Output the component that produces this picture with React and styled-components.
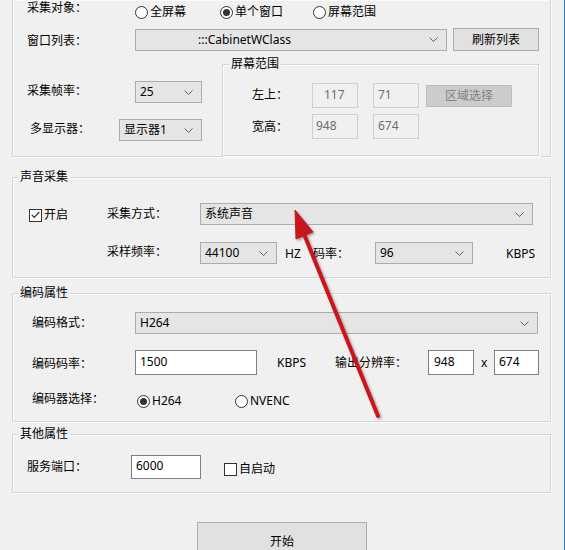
import React from 'react'
import styled, { createGlobalStyle } from 'styled-components'

const GlobalStyle = createGlobalStyle`
  html, body {
    margin: 0;
    padding: 0;
    background: #f0f0f0;
  }
  body {
    font-family: "Noto Sans", "Noto Sans CJK SC", sans-serif;
    font-size: 12px;
    color: #000;
  }
`

const Window = styled.div`
  position: relative;
  box-sizing: border-box;
  width: 565px;
  height: 550px;
  overflow: hidden;
  background: #f0f0f0;
  border-right: 1px solid #2a7fd0;
`

const Group = styled.div`
  position: relative;
  box-sizing: border-box;
  width: ${({ $w }) => $w || 539}px;
  height: ${({ $h }) => $h}px;
  margin: ${({ $mt }) => $mt || 0}px 0 0 ${({ $ml }) => ($ml === undefined ? 12 : $ml)}px;
  padding-top: ${({ $pt }) => $pt || 0}px;
  border: 1px solid #d5d5d5;
  ${({ $open }) => $open && 'border-top: none;'}
  box-shadow: inset 1px 1px 0 #fbfbfb, 1px 1px 0 #fbfbfb;
  flex: none;
`

const GroupTitle = styled.span`
  position: absolute;
  top: -9px;
  left: ${({ $left }) => $left || 5}px;
  padding: 0 2px;
  line-height: 16px;
  background: #f0f0f0;
`

const Row = styled.div`
  display: flex;
  align-items: center;
  height: ${({ $h }) => $h || 22}px;
  margin-top: ${({ $mt }) => $mt || 0}px;
  padding-left: ${({ $pl }) => $pl || 0}px;
`

const Split = styled.div`
  display: flex;
  align-items: flex-start;
  height: ${({ $h }) => $h}px;
  margin-top: ${({ $mt }) => $mt || 0}px;
`

const Column = styled.div`
  flex: none;
  width: ${({ $w }) => $w}px;
  padding-top: ${({ $pt }) => $pt || 0}px;
`

const shift = ({ $shift = 0 }) => `
  margin-top: ${Math.max(0, 2 * $shift)}px;
  margin-bottom: ${Math.max(0, -2 * $shift)}px;
`

const Label = styled.span`
  flex: none;
  box-sizing: border-box;
  width: ${({ $w }) => ($w ? `${$w}px` : 'auto')};
  margin-left: ${({ $ml }) => $ml || 0}px;
  padding-left: ${({ $pl }) => $pl || 0}px;
  line-height: 16px;
  white-space: nowrap;
  ${shift}
`

const Lead = styled.div`
  flex: none;
  display: flex;
  align-items: center;
  box-sizing: border-box;
  width: 94px;
  padding-left: 16px;
  ${shift}
`

const Combo = styled.div`
  flex: none;
  box-sizing: border-box;
  display: flex;
  align-items: center;
  width: ${({ $w }) => $w}px;
  height: 22px;
  padding: 0 8px 0 ${({ $pl }) => $pl || 4}px;
  background: #e5e5e5;
  border: 1px solid #acacac;
  line-height: 16px;

  span {
    flex: 1;
    white-space: nowrap;
    overflow: hidden;
  }
`

const Input = styled.div`
  flex: none;
  box-sizing: border-box;
  display: flex;
  align-items: center;
  width: ${({ $w }) => $w}px;
  height: ${({ $h }) => $h || 25}px;
  margin-left: ${({ $ml }) => $ml || 0}px;
  padding-left: ${({ $pl }) => $pl || 4}px;
  padding-bottom: 2px;
  background: ${({ $disabled }) => ($disabled ? '#f0f0f0' : '#fff')};
  border: 1px solid ${({ $disabled }) => ($disabled ? '#cfcfcf' : '#7f7f7f')};
  color: ${({ $disabled }) => ($disabled ? '#6d6d6d' : '#000')};
  line-height: 16px;
`

const Button = styled.div`
  flex: none;
  box-sizing: border-box;
  display: flex;
  align-items: center;
  justify-content: center;
  width: ${({ $w }) => $w}px;
  height: ${({ $h }) => $h || 23}px;
  margin-left: ${({ $ml }) => $ml || 0}px;
  background: ${({ $disabled }) => ($disabled ? '#cccccc' : '#e1e1e1')};
  border: 1px solid ${({ $disabled }) => ($disabled ? '#bfbfbf' : '#adadad')};
  color: ${({ $disabled }) => ($disabled ? '#838383' : '#000')};
  line-height: 16px;
`

const Option = styled.label`
  flex: none;
  display: flex;
  align-items: center;
  gap: 2px;
  width: ${({ $w }) => ($w ? `${$w}px` : 'auto')};
  margin-left: ${({ $ml }) => $ml || 0}px;
  line-height: 16px;
  white-space: nowrap;
  ${shift}
`

const RadioDot = styled.span`
  position: relative;
  box-sizing: border-box;
  width: 13px;
  height: 13px;
  border: 1px solid #333;
  border-radius: 50%;
  background: #fff;

  &::after {
    content: '';
    display: ${({ $on }) => ($on ? 'block' : 'none')};
    position: absolute;
    left: 2px;
    top: 2px;
    width: 7px;
    height: 7px;
    border-radius: 50%;
    background: #333;
  }
`

const CheckBox = styled.span`
  display: flex;
  align-items: center;
  justify-content: center;
  box-sizing: border-box;
  width: 13px;
  height: 13px;
  border: 1px solid #333;
  background: #fff;
`

const Footer = styled.div`
  display: flex;
  justify-content: center;
  margin-top: 29px;
`

const Overlay = styled.svg`
  position: absolute;
  left: 0;
  top: 0;
  pointer-events: none;
`

function Chevron() {
  return (
    <svg width="9" height="5" viewBox="0 0 9 5">
      <polyline points="0.5,0.5 4.5,4.5 8.5,0.5" fill="none" stroke="#606060" strokeWidth="1" />
    </svg>
  )
}

function Select({ w, pl, children }) {
  return (
    <Combo $w={w} $pl={pl}>
      <span>{children}</span>
      <Chevron />
    </Combo>
  )
}

function Radio({ on, children, ...rest }) {
  return (
    <Option {...rest}>
      <RadioDot $on={on} />
      {children}
    </Option>
  )
}

function Check({ on, children, ...rest }) {
  return (
    <Option {...rest}>
      <CheckBox>
        {on && (
          <svg width="9" height="8" viewBox="0 0 9 8">
            <polyline points="0.8,4 3.3,6.5 8.3,1" fill="none" stroke="#333" strokeWidth="1.2" />
          </svg>
        )}
      </CheckBox>
      {children}
    </Option>
  )
}

function Arrow() {
  return (
    <Overlay width="565" height="550">
      <defs>
        <filter id="shade" x="-20%" y="-20%" width="140%" height="140%">
          <feDropShadow dx="1.5" dy="1.5" stdDeviation="1.2" floodColor="#000" floodOpacity="0.35" />
        </filter>
      </defs>
      <g filter="url(#shade)" fill="#c8161b" stroke="#c8161b">
        <line x1="378" y1="416" x2="304" y2="234" strokeWidth="4" strokeLinecap="round" />
        <polygon points="295,210 296,239 313,232" strokeWidth="1" strokeLinejoin="round" />
      </g>
    </Overlay>
  )
}

export default function App() {
  return (
    <>
      <GlobalStyle />
      <Window>
        <Group $open $h={157}>
          <Row $h={22} $pl={14}>
            <Label $w={108} $shift={-3}>采集对象：</Label>
            <Radio $w={85} $shift={1}>全屏幕</Radio>
            <Radio $w={93} $shift={1} on>单个窗口</Radio>
            <Radio $shift={1}>屏幕范围</Radio>
          </Row>
          <Row $h={23} $mt={6} $pl={14}>
            <Label $w={108} $shift={1}>窗口列表：</Label>
            <Select w={312} pl={62}>:::CabinetWClass</Select>
            <Button $w={86} $ml={6}>刷新列表</Button>
          </Row>
          <Split $h={92} $mt={13}>
            <Column $w={209} $pt={17}>
              <Row $h={22} $pl={14}>
                <Label $w={108} $shift={-1}>采集帧率：</Label>
                <Select w={67}>25</Select>
              </Row>
              <Row $h={22} $mt={16} $pl={17}>
                <Label $w={89} $shift={-1.5}>多显示器：</Label>
                <Select w={83}>显示器1</Select>
              </Row>
            </Column>
            <Group $w={317} $h={92} $ml={0} $pt={18}>
              <GroupTitle $left={6}>屏幕范围</GroupTitle>
              <Row $h={25} $pl={29}>
                <Label $w={60} $shift={-1}>左上：</Label>
                <Input $w={46} $disabled $pl={11}>117</Input>
                <Input $w={46} $ml={15} $disabled>71</Input>
                <Button $w={86} $h={22} $ml={7} $disabled>区域选择</Button>
              </Row>
              <Row $h={25} $mt={6} $pl={29}>
                <Label $w={60} $shift={0.5}>宽高：</Label>
                <Input $w={46} $disabled $pl={3}>948</Input>
                <Input $w={46} $ml={15} $disabled>674</Input>
              </Row>
            </Group>
          </Split>
        </Group>

        <Group $mt={20} $h={101} $pt={25}>
          <GroupTitle>声音采集</GroupTitle>
          <Row $h={22}>
            <Lead $shift={1}>
              <Check on>开启</Check>
            </Lead>
            <Label $w={93} $shift={-0.5}>采集方式：</Label>
            <Select w={333}>系统声音</Select>
          </Row>
          <Row $h={22} $mt={17}>
            <Lead />
            <Label $w={93} $shift={-1.5}>采样频率：</Label>
            <Select w={77}>44100</Select>
            <Label $w={28} $ml={8} $shift={1}>HZ</Label>
            <Label $w={62} $shift={1}>码率：</Label>
            <Select w={98}>96</Select>
            <Label $ml={33} $shift={1}>KBPS</Label>
          </Row>
        </Group>

        <Group $mt={15} $h={129} $pt={18}>
          <GroupTitle>编码属性</GroupTitle>
          <Row $h={22} $pl={19}>
            <Label $w={103}>编码格式：</Label>
            <Select w={403}>H264</Select>
          </Row>
          <Row $h={25} $mt={16} $pl={19}>
            <Label $w={103} $shift={1}>编码码率：</Label>
            <Input $w={122} $pl={4}>1500</Input>
            <Label $w={58} $ml={20} $shift={0.5}>KBPS</Label>
            <Label $w={93} $shift={0.5}>输出分辨率：</Label>
            <Input $w={46} $pl={5}>948</Input>
            <Label $w={20} $pl={7}>x</Label>
            <Input $w={45} $pl={4}>674</Input>
          </Row>
          <Row $h={16} $mt={18} $pl={19}>
            <Label $w={105} $shift={-2}>编码器选择：</Label>
            <Radio $w={98} on>H264</Radio>
            <Radio>NVENC</Radio>
          </Row>
        </Group>

        <Group $mt={12} $h={59} $pt={20}>
          <GroupTitle>其他属性</GroupTitle>
          <Row $h={24} $pl={14}>
            <Label $w={104}>服务端口：</Label>
            <Input $w={70} $h={24} $pl={4}>6000</Input>
            <Check $ml={23} $shift={2}>自启动</Check>
          </Row>
        </Group>

        <Footer>
          <Button $w={170} $h={40}>开始</Button>
        </Footer>

        <Arrow />
      </Window>
    </>
  )
}
